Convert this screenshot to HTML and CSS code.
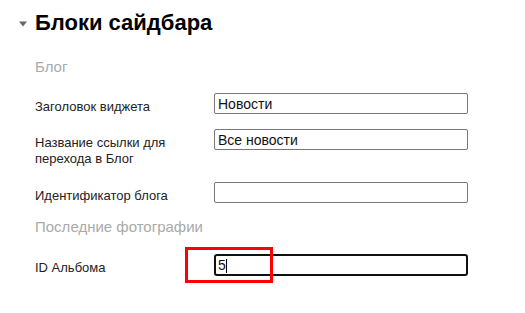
FILE: index.html
```html
<!DOCTYPE html>
<html lang="ru">
<head>
  <meta charset="UTF-8">
  <title>Блоки сайдбара</title>
  <link rel="stylesheet" href="styles.css">
</head>
<body>
  <div class="panel">
    <h2 class="panel-title">
      <svg class="toggle" width="8" height="6" viewBox="0 0 8 6"><path d="M0 0.5h8L4 5.5z" fill="#666"/></svg>
      Блоки сайдбара
    </h2>

    <div class="group">
      <h3 class="group-title">Блог</h3>
      <div class="row">
        <label for="widgetTitle">Заголовок виджета</label>
        <input type="text" id="widgetTitle" value="Новости">
      </div>
      <div class="row row-tall">
        <label for="blogLink">Название ссылки для перехода в Блог</label>
        <input type="text" id="blogLink" value="Все новости">
      </div>
      <div class="row">
        <label for="blogId">Идентификатор блога</label>
        <input type="text" id="blogId" value="">
      </div>
    </div>

    <div class="group">
      <h3 class="group-title">Последние фотографии</h3>
      <div class="row">
        <label for="albumId">ID Альбома</label>
        <div class="field-wrap">
          <input type="text" id="albumId" class="focused" value="5">
          <span class="caret"></span>
          <span class="highlight"></span>
        </div>
      </div>
    </div>
  </div>
</body>
</html>
```

FILE: styles.css
```css
body {
  margin: 0;
  font-family: "Liberation Sans", Arial, sans-serif;
  background-color: #fff;
  color: #222;
}

.panel {
  padding: 10px 0 0 19px;
}

.panel-title {
  display: flex;
  align-items: center;
  margin: 0;
  font-size: 22px;
  line-height: 26px;
  color: #000;
}

.toggle {
  margin: 1px 8px 0 0;
}

.group {
  padding-left: 16px;
}

.group-title {
  margin: 0;
  font-size: 15px;
  font-weight: normal;
  color: #aaa;
  line-height: 18px;
}

.group:first-of-type .group-title {
  margin: 22px 0 17px;
}

.group + .group .group-title {
  margin: 8px 0 18px;
}

.row {
  display: grid;
  grid-template-columns: 179px 254px;
  align-items: start;
  margin-bottom: 15px;
}

.row label {
  font-size: 13px;
  line-height: 16px;
  padding-top: 6px;
  margin-bottom: -1px;
}

.row-tall label {
  margin-bottom: 0;
}

.row input {
  box-sizing: border-box;
  width: 254px;
  height: 21px;
  margin: 0;
  padding: 0 3px;
  font-family: inherit;
  font-size: 14px;
  color: #111;
  border: 1px solid #777;
  border-radius: 2px;
  background: #fff;
  outline: none;
}

.row input.focused {
  height: 22px;
  border: 2px solid #111;
  border-radius: 3px;
  padding: 0 2px;
}

.field-wrap {
  position: relative;
}

.field-wrap .caret {
  position: absolute;
  left: 12px;
  top: 5px;
  width: 1px;
  height: 14px;
  background: #000;
}

.field-wrap .highlight {
  position: absolute;
  left: -29px;
  top: -7px;
  width: 82px;
  height: 30px;
  border: 3px solid #f00;
  pointer-events: none;
}
```
